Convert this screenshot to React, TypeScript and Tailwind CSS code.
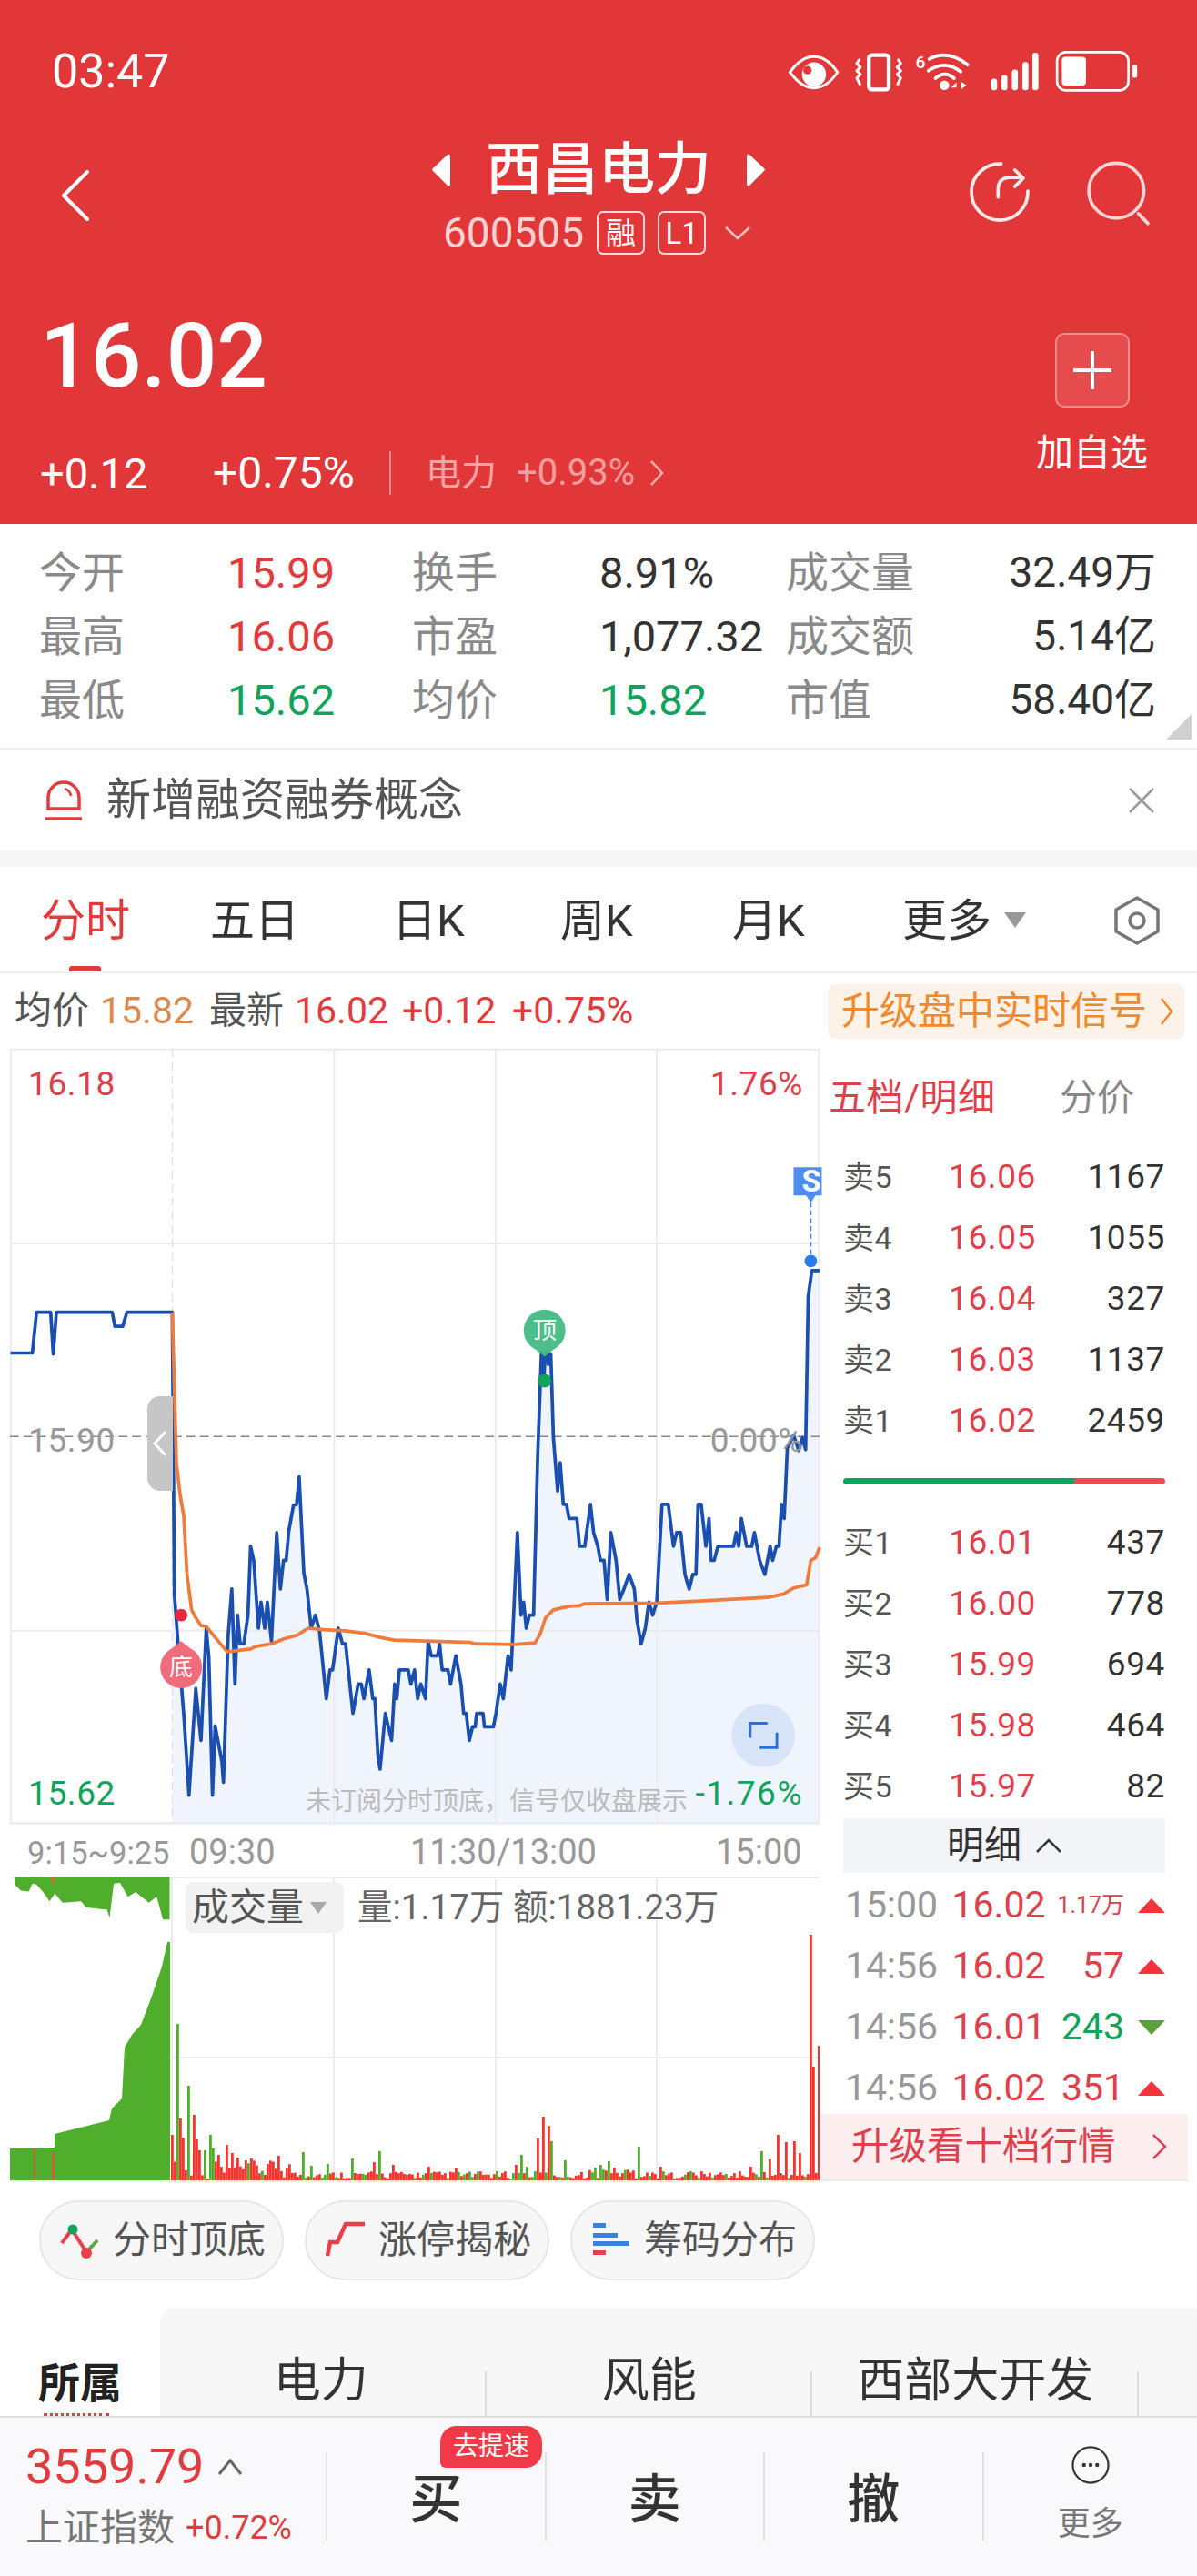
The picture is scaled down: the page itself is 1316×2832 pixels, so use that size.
import React from "react";

const BLUE_LINE =
  "20,588 62,588 70,510 97,510 102,590 108,510 215,510 220,537 235,537 243,510 330,510 334,1050 340,1130 352,1280 362,1435 375,1230 385,1330 395,1115 400,1170 407,1435 412,1302 425,1370 428,1410 437,1130 444,1040 450,1222 455,1090 460,1145 467,1145 475,1090 480,958 486,985 495,1115 500,1065 507,1115 512,1065 520,1140 530,932 537,1040 543,985 548,985 553,930 562,880 568,878 573,825 582,1010 588,1040 596,1115 604,1090 612,1120 625,1250 632,1195 637,1195 648,1115 656,1145 662,1145 676,1278 686,1222 692,1222 697,1250 707,1195 714,1250 718,1250 724,1360 728,1385 738,1278 750,1330 756,1222 760,1250 765,1195 782,1195 787,1222 794,1195 800,1250 806,1222 815,1250 820,1140 826,1168 838,1168 842,1145 847,1195 858,1195 863,1222 873,1168 883,1222 888,1278 893,1278 899,1330 905,1304 910,1304 913,1278 925,1278 928,1304 945,1304 950,1278 958,1222 964,1250 973,1168 979,1195 991,932 998,1090 1003,1065 1008,1115 1014,1090 1022,1090 1030,780 1037,590 1042,640 1047,510 1050,610 1055,590 1060,750 1068,852 1073,798 1079,878 1085,878 1090,905 1105,905 1110,958 1120,958 1131,878 1137,932 1145,958 1150,985 1157,985 1163,1060 1170,932 1180,985 1187,1060 1195,1040 1205,1012 1215,1040 1220,1100 1228,1145 1236,1115 1243,1065 1250,1090 1258,1065 1268,878 1280,878 1290,958 1296,932 1304,932 1312,1012 1320,1040 1327,1012 1333,1012 1337,878 1343,878 1352,958 1358,905 1362,985 1368,985 1375,958 1405,958 1410,932 1415,958 1420,905 1430,958 1440,958 1445,932 1455,985 1465,1012 1475,958 1480,985 1487,958 1492,958 1497,878 1502,905 1508,770 1520,745 1530,775 1537,750 1543,773 1548,480 1555,430 1570,430";
const AVG_LINE =
  "330,510 338,800 345,860 352,900 358,1010 367,1080 375,1095 385,1110 395,1112 410,1130 435,1160 480,1155 490,1150 520,1145 545,1135 570,1128 590,1115 620,1118 660,1120 700,1125 730,1133 755,1138 830,1140 900,1142 910,1145 985,1146 1025,1143 1035,1125 1045,1095 1060,1080 1090,1073 1110,1072 1120,1068 1260,1067 1340,1063 1470,1056 1500,1050 1520,1038 1545,1032 1553,985 1562,980 1570,960";
const FILL_AREA = "330,1490 " + BLUE_LINE.slice(BLUE_LINE.indexOf("330,510")) + " 1570,1490";

const Z = 1.7422;
const preTop = [[28, 68], [28, 95], [40, 115], [55, 118], [62, 92], [70, 95], [85, 125], [95, 150], [105, 125], [120, 155], [155, 150], [165, 170], [205, 178], [210, 205], [218, 92], [230, 90], [245, 135], [260, 120], [285, 155], [300, 135], [305, 165], [312, 210], [325, 210], [325, 68]]
  .map(([x, y]) => `${(x / Z).toFixed(1)},${(2040 + y / 2.99).toFixed(1)}`)
  .join(" ");
const preVol =
  "11,2397 11,2362 60,2361 60,2346 120,2331 123,2318 134,2307 137,2251 145,2237 155,2226 166,2197 178,2162 184,2135 187,2135 187,2397";

// peaks read off the volume chart, the rest is low noise
const peaks: Record<number, [number, string]> = {};
const peakList: [number, number, string][] = [
  [328, 50, "r"], [336, 172, "g"], [345, 68, "r"], [351, 47, "r"], [358, 104, "g"], [367, 72, "r"], [372, 45, "r"], [380, 33, "r"], [390, 33, "g"], [402, 50, "g"], [408, 35, "g"], [418, 28, "r"], [433, 39, "r"], [440, 30, "r"], [452, 25, "r"], [480, 24, "r"], [510, 18, "r"], [532, 27, "r"], [577, 31, "g"], [593, 16, "g"], [625, 18, "g"], [675, 24, "g"], [716, 20, "r"], [723, 32, "g"], [753, 17, "r"], [820, 15, "r"], [872, 13, "r"], [985, 17, "r"], [995, 28, "g"], [1005, 15, "g"], [1028, 46, "r"], [1038, 70, "r"], [1047, 60, "r"], [1052, 43, "g"], [1078, 22, "g"], [1140, 14, "g"], [1150, 17, "g"], [1162, 21, "g"], [1223, 37, "g"], [1265, 15, "r"], [1320, 10, "g"], [1433, 15, "r"], [1455, 32, "g"], [1470, 23, "r"], [1490, 50, "r"], [1505, 42, "r"], [1517, 43, "r"], [1532, 30, "r"], [1548, 270, "r"], [1555, 125, "r"], [1565, 148, "r"],
];
peakList.forEach(([x, h, c]) => {
  peaks[Math.round((x / Z - 188) / 3)] = [h, c];
});
const volBars = Array.from({ length: 238 }, (_, i) => {
  const r = Math.abs(Math.sin(i * 12.9898) * 43758.5453) % 1;
  const q = Math.abs(Math.sin(i * 78.233) * 12543.123) % 1;
  const early = i < 45 ? 16 : i > 150 && i < 175 ? 9 : 4;
  const h = 2 + r * (early + 4);
  const p = peaks[i];
  return {
    x: 188 + i * 3,
    h: p ? p[0] : h,
    fill: (p ? p[1] : q < 0.25 ? "g" : "r") === "g" ? "#4fae2c" : "#f4342f",
  };
});

const sells = [["卖5", "16.06", "1167"], ["卖4", "16.05", "1055"], ["卖3", "16.04", "327"], ["卖2", "16.03", "1137"], ["卖1", "16.02", "2459"]];
const buys = [["买1", "16.01", "437"], ["买2", "16.00", "778"], ["买3", "15.99", "694"], ["买4", "15.98", "464"], ["买5", "15.97", "82"]];

const stats = [
  ["今开", "15.99", "text-[#e23b3d]", "换手", "8.91%", "text-[#333]", "成交量", "32.49万"],
  ["最高", "16.06", "text-[#e23b3d]", "市盈", "1,077.32", "text-[#333]", "成交额", "5.14亿"],
  ["最低", "15.62", "text-[#0ea45c]", "均价", "15.82", "text-[#0ea45c]", "市值", "58.40亿"],
];

const ticks = [
  { t: "15:00", p: "16.02", v: "1.17万", small: true, up: true },
  { t: "14:56", p: "16.02", v: "57", up: true },
  { t: "14:56", p: "16.01", v: "243", up: false },
  { t: "14:56", p: "16.02", v: "351", up: true },
];

function BookRow({ row }: { row: string[] }) {
  return (
    <div className="h-[67px] grid grid-cols-[116px_1fr_auto] items-center text-[37px] tracking-[0.6px]">
      <span className="text-[#555] text-[34px]">{row[0]}</span>
      <span className="text-[#e0404c]">{row[1]}</span>
      <span className="text-[#333]">{row[2]}</span>
    </div>
  );
}

function Pill({ icon, label }: { icon: React.ReactNode; label: string }) {
  return (
    <div className="w-[269px] h-[88px] rounded-full bg-[#f7f7f7] border-2 border-[#e6e6e6] flex items-center pl-[20px] gap-[13px]">
      <span className="w-[46px] h-[46px] shrink-0">{icon}</span>
      <span className="text-[42px] text-[#555] whitespace-nowrap">{label}</span>
    </div>
  );
}

function ChartLabel({ className, children }: { className: string; children: React.ReactNode }) {
  return <span className={`absolute text-[37px] tracking-[0.6px] ${className}`}>{children}</span>;
}

export default function App() {
  return (
    <div className="w-[1316px] h-[2832px] overflow-hidden bg-white leading-none [font-family:Roboto,'Noto_Sans_CJK_SC',sans-serif]">
      {/* Red header */}
      <div className="h-[576px] bg-[#e13739] text-white flex flex-col">
        <div className="h-[156px] flex items-center justify-between pl-[57px] pr-[64px]">
          <span className="text-[52px] pt-[2px]">03:47</span>
          <svg width="387" height="48" viewBox="198 100 1162 145" fill="none" stroke="#fff">
            <path d="M205 177C235 135 260 125 284 125C308 125 335 135 363 177C335 218 308 229 284 229C260 229 235 218 205 177Z" strokeWidth="9" />
            <circle cx="285" cy="184" r="40" fill="#fff" stroke="none" />
            <circle cx="263" cy="170" r="14" fill="#e13739" stroke="none" />
            <rect x="467" y="120" width="66" height="114" rx="10" strokeWidth="13" />
            <path d="M435 136l-8 12 12 12-12 12 12 12-12 12 10 20M565 136l8 12-12 12 12 12-12 12 12 12-10 20" strokeWidth="9" strokeLinecap="round" strokeLinejoin="round" />
            <text x="622" y="162" fill="#fff" stroke="none" fontSize="58" fontWeight="500">6</text>
            <path d="M668 133Q730 100 795 152M665 172Q720 135 772 175M688 197Q720 170 750 197" strokeWidth="11" strokeLinecap="round" />
            <circle cx="718" cy="220" r="16" fill="#fff" stroke="none" />
            <path d="M740 228l18-18v18zM772 208l20 12-20 14z" fill="#fff" stroke="none" />
            {[[873, 198], [907, 186], [942, 168], [977, 143], [1010, 112]].map(([x, y]) => (
              <rect key={x} x={x} y={y} width="20" height={237 - y} rx="9" fill="#fff" stroke="none" />
            ))}
            <rect x="1092" y="110" width="237" height="127" rx="30" strokeWidth="8" />
            <rect x="1108" y="126" width="80" height="95" rx="12" fill="#fff" stroke="none" />
            <rect x="1342" y="153" width="16" height="42" rx="6" fill="#fff" stroke="none" />
          </svg>
        </div>

        <div className="h-[118px] grid grid-cols-[1fr_auto_1fr]">
          <div className="pl-[66px] pt-[30px]">
            <svg width="34" height="58" viewBox="0 0 34 58" fill="none" stroke="#fff" strokeWidth="4" strokeLinecap="round" strokeLinejoin="round">
              <path d="M30 3L4 29l26 26" />
            </svg>
          </div>
          <div className="flex flex-col items-center">
            <div className="h-[62px] flex items-center gap-[38px]">
              <svg width="21" height="36" viewBox="0 0 21 36" fill="#fff"><path d="M20 2v32a2 2 0 0 1-3 1L1 19a2 2 0 0 1 0-3L17 1a2 2 0 0 1 3 1z" /></svg>
              <span className="text-[62px] font-medium whitespace-nowrap">西昌电力</span>
              <svg width="21" height="36" viewBox="0 0 21 36" fill="#fff"><path d="M1 2v32a2 2 0 0 0 3 1L20 19a2 2 0 0 0 0-3L4 1a2 2 0 0 0-3 1z" /></svg>
            </div>
            <div className="mt-[14px] h-[48px] flex items-center text-[#ffd2d2] pr-[3px]">
              <span className="text-[46px]">600505</span>
              <span className="ml-[14px] w-[53px] h-[48px] border-2 border-[#ffd9d9] rounded-[7px] flex items-center justify-center text-[33px] text-white">融</span>
              <span className="ml-[14px] w-[53px] h-[48px] border-2 border-[#ffd9d9] rounded-[7px] flex items-center justify-center text-[33px] text-white">L1</span>
              <svg className="ml-[20px]" width="30" height="16" viewBox="0 0 30 16" fill="none" stroke="#ffc6c6" strokeWidth="2.5"><path d="M2 2l13 12L28 2" /></svg>
            </div>
          </div>
          <div className="flex justify-end items-start pr-[50px] pt-[19px] gap-[58px]">
            <svg width="70" height="72" viewBox="790 475 210 215" fill="none" stroke="#ffeaea" strokeWidth="11" strokeLinecap="round" strokeLinejoin="round">
              <path d="M900 490A93 93 0 1 0 988 580" />
              <path d="M890 600V575Q890 535 930 535H970M945 510L973 537L945 565" />
            </svg>
            <svg width="74" height="74" viewBox="1180 470 220 220" fill="none" stroke="#ffd5d5" strokeWidth="11" strokeLinecap="round">
              <circle cx="1285" cy="573" r="90" />
              <path d="M1357 648L1388 680" />
            </svg>
          </div>
        </div>

        <div className="flex-1 flex justify-between pl-[44px] pr-[54px]">
          <div className="flex flex-col">
            <span className="text-[98px] font-medium mt-[83px] h-[70px] flex items-center">16.02</span>
            <div className="mt-[68px] h-[50px] flex items-center">
              <span className="text-[47px] w-[190px]">+0.12</span>
              <span className="text-[48px] w-[194px]">+0.75%</span>
              <span className="w-[2px] h-[48px] bg-[#ed8a8a]" />
              <span className="ml-[38px] text-[39px] text-[#f7a6a6]">电力</span>
              <span className="ml-[22px] text-[40px] text-[#f59f9f]">+0.93%</span>
              <svg className="ml-[16px]" width="16" height="30" viewBox="0 0 16 30" fill="none" stroke="#f7b3b3" strokeWidth="2.5"><path d="M2 2l12 13L2 28" /></svg>
            </div>
          </div>
          <div className="flex flex-col items-center pt-[92px]">
            <div className="w-[82px] h-[82px] rounded-[10px] bg-[#e64c4e] border-2 border-[#f08c8c] flex items-center justify-center">
              <svg width="44" height="44" viewBox="0 0 44 44" stroke="#fff" strokeWidth="4"><path d="M22 1v42M1 22h42" /></svg>
            </div>
            <span className="mt-[30px] text-[41px] whitespace-nowrap">加自选</span>
          </div>
        </div>
      </div>

      {/* Quote stats */}
      <div className="relative h-[248px] border-b-2 border-[#eee] pt-[18px] pl-[43px] pr-[45px]">
        {stats.map((s) => (
          <div key={s[0]} className="h-[70px] grid grid-cols-[207px_203px_206px_205px_1fr_auto] items-center text-[47px]">
            <span className="text-[47px] text-[#8a8a8a]">{s[0]}</span>
            <span className={s[2]}>{s[1]}</span>
            <span className="text-[47px] text-[#8a8a8a]">{s[3]}</span>
            <span className={`${s[5]} text-[47px]`}>{s[4]}</span>
            <span className="text-[47px] text-[#8a8a8a] whitespace-nowrap">{s[6]}</span>
            <span className="text-[#333] text-[46px]">{s[7]}</span>
          </div>
        ))}
        <svg className="absolute right-[6px] bottom-[9px]" width="28" height="28" viewBox="0 0 28 28" fill="#d0d0d0"><path d="M28 0v28H0z" /></svg>
      </div>

      {/* Notice */}
      <div className="h-[111px] flex items-center pl-[48px] pr-[46px]">
        <svg width="44" height="46" viewBox="0 0 44 46" fill="none" stroke="#e23b3d" strokeWidth="3.5">
          <path d="M5 32V20a17 17 0 0 1 34 0v12zM2 43h40" />
          <path d="M23 10a10 10 0 0 1 7 8" strokeWidth="2.5" />
        </svg>
        <span className="ml-[25px] text-[49px] text-[#555] flex-1">新增融资融券概念</span>
        <svg width="30" height="30" viewBox="0 0 30 30" fill="none" stroke="#999" strokeWidth="2.5"><path d="M2 2l26 26M28 2L2 28" /></svg>
      </div>
      <div className="h-[18px] bg-[#f6f6f6]" />

      {/* Period tabs */}
      <div className="relative h-[117px] border-b-2 border-[#eee] flex items-center text-[49px] text-[#333] pt-[3px]">
        <span className="absolute left-[45px] text-[#e23b3d]">分时</span>
        <span className="absolute left-[231px]">五日</span>
        <span className="absolute left-[431px]">日K</span>
        <span className="absolute left-[616px]">周K</span>
        <span className="absolute left-[805px]">月K</span>
        <span className="absolute left-[992px]">更多</span>
        <svg className="absolute left-[1104px] top-[50px]" width="24" height="17" viewBox="0 0 24 17" fill="#999"><path d="M0 0h24L12 17z" /></svg>
        <svg className="absolute left-[1224px] top-[32px]" width="52" height="54" viewBox="0 0 52 54" fill="none" stroke="#777" strokeWidth="3.5" strokeLinejoin="round">
          <path d="M26 2l23 13v24L26 52 3 39V15z" />
          <circle cx="26" cy="27" r="8" />
        </svg>
        <span className="absolute left-[76px] bottom-0 w-[35px] h-[6px] rounded-t-[3px] bg-[#e23b3d]" />
      </div>

      {/* Price summary */}
      <div className="h-[83px] flex items-center justify-between pl-[16px] pr-[14px] text-[41px]">
        <div className="flex items-center">
          <span className="text-[#555] w-[94px] text-[41px]">均价</span>
          <span className="text-[#d98b4f] w-[120px]">15.82</span>
          <span className="text-[#555] w-[94px] text-[41px]">最新</span>
          <span className="text-[#e23b3d] w-[118px]">16.02</span>
          <span className="text-[#e23b3d] w-[121px]">+0.12</span>
          <span className="text-[#e23b3d]">+0.75%</span>
        </div>
        <div className="w-[392px] h-[60px] rounded-[8px] bg-[#fdf2e8] flex items-center pl-[15px] text-[#f08a2c] text-[42px]">
          升级盘中实时信号
          <svg className="ml-[14px]" width="15" height="32" viewBox="0 0 15 32" fill="none" stroke="#f08a2c" strokeWidth="2.5"><path d="M2 2l11 14L2 30" /></svg>
        </div>
      </div>

      {/* Chart + order book */}
      <div className="h-[1246px] flex">
        <div className="w-[901px] pl-[11px] shrink-0 flex flex-col">
          <div className="relative h-[852px]">
            <svg className="block overflow-visible" width="890" height="852" viewBox="19.16 5.23 1550.56 1484.35" fill="none">
              <polygon points={FILL_AREA} fill="#eff4fd" />
              <g stroke="#ececee" strokeWidth="3.5">
                <path d="M19 6.5H1570M19 378H1570M19 1120H1570M19 1488.5H1570" />
                <path d="M640 5V1490M949 5V1490M1258 5V1490M1568.5 5V1490M20.5 5V1490" />
              </g>
              <path d="M330 5V1490" stroke="#e2e2e2" strokeWidth="2.5" strokeDasharray="16 10" />
              <path d="M19 748H1570" stroke="#888" strokeWidth="2.5" strokeDasharray="17 9" />
              <polyline points={BLUE_LINE} stroke="#1a4fb0" strokeWidth="6.5" strokeLinejoin="round" />
              <polyline points={AVG_LINE} stroke="#ef7b3c" strokeWidth="6.5" strokeLinejoin="round" />
              {/* signal markers */}
              <circle cx="347" cy="1090" r="12" fill="#e8283e" />
              <path d="M347 1140L372 1160H322Z" fill="#ef6c7a" />
              <circle cx="347" cy="1190" r="40" fill="#ef6c7a" />
              <path d="M1043 595L1018 575H1068Z" fill="#3fb783" />
              <circle cx="1043" cy="545" r="40" fill="#4dbd8a" />
              <circle cx="1043" cy="641" r="13" fill="#0ea45c" />
              <path d="M1553 300V400" stroke="#3b82f0" strokeWidth="3" strokeDasharray="9 6" />
              <circle cx="1553" cy="412" r="12" fill="#2a7bf0" />
              <path d="M1520 232H1574V286H1562L1553 300 1544 286H1520Z" fill="#4f8ef0" />
              <circle cx="1462" cy="1320" r="61" fill="#d7e4fa" />
              <path d="M1437 1325V1297H1470M1488 1315V1344H1455" stroke="#2a6fe0" strokeWidth="5" />
            </svg>
            <ChartLabel className="left-[20px] top-[20px] text-[#e0404c]">16.18</ChartLabel>
            <ChartLabel className="right-[18px] top-[20px] text-[#e0404c]">1.76%</ChartLabel>
            <ChartLabel className="left-[20px] top-[412px] text-[#999]">15.90</ChartLabel>
            <ChartLabel className="right-[18px] top-[412px] text-[#999]">0.00%</ChartLabel>
            <ChartLabel className="left-[20px] top-[800px] text-[#0ea45c]">15.62</ChartLabel>
            <ChartLabel className="right-[18px] top-[800px] text-[#0ea45c] tracking-[1.5px]">-1.76%</ChartLabel>
            <span className="absolute left-[325px] top-[814px] text-[28px] text-[#bbb] whitespace-nowrap">未订阅分时顶底，信号仅收盘展示</span>
            <div className="absolute left-[151px] top-[382px] w-[28px] h-[104px] rounded-l-[14px] bg-[#c6c6c6] flex items-center justify-center">
              <svg width="16" height="30" viewBox="0 0 16 30" fill="none" stroke="#fff" strokeWidth="3"><path d="M14 2L2 15l12 13" /></svg>
            </div>
            <span className="absolute left-[165px] top-[667px] w-[46px] text-center text-[26px] text-white">底</span>
            <span className="absolute left-[565px] top-[297px] w-[46px] text-center text-[26px] text-white">顶</span>
            <span className="absolute top-[128px] left-[866px] w-[30px] text-center text-[34px] font-bold text-white">S</span>
          </div>

          <div className="relative h-[58px] text-[38px] text-[#999]">
            <span className="absolute left-[19px] top-[15px] text-[34.5px]">9:15~9:25</span>
            <span className="absolute left-[197px] top-[12px]">09:30</span>
            <span className="absolute left-[440px] top-[12px]">11:30/13:00</span>
            <span className="absolute left-[776px] top-[12px]">15:00</span>
          </div>

          <div className="relative h-[334px]">
            <svg className="block" width="890" height="336" viewBox="11 2063 890 336" fill="none">
              <path d="M11 2064H901M189 2262H901" stroke="#ececee" strokeWidth="2" />
              <path d="M367 2063V2397M545 2063V2397M722 2063V2397M189 2063V2397" stroke="#ececee" strokeWidth="2" />
              <polygon points={preTop} fill="#4fae2c" />
              <rect x="57" y="2063" width="3" height="7" fill="#e2603a" />
              <polygon points={preVol} fill="#4fae2c" />
              <rect x="37" y="2362" width="2" height="35" fill="#d0603a" />
              <rect x="57" y="2366" width="3" height="31" fill="#d0603a" />
              {volBars.map((b) => (
                <rect key={b.x} x={b.x} y={2397 - b.h} width="2.8" height={b.h} fill={b.fill} />
              ))}
              <path d="M11 2398H901" stroke="#ececee" strokeWidth="2" />
            </svg>
            <div className="absolute left-[193px] top-[6px] w-[174px] h-[56px] rounded-[8px] bg-[#f2f2f2] flex items-center pl-[7px] text-[41px] text-[#555]">
              成交量
              <svg className="ml-[7px]" width="18" height="13" viewBox="0 0 18 13" fill="#a8a8a8"><path d="M0 0h18L9 13z" /></svg>
            </div>
            <span className="absolute left-[382px] top-[15px] text-[38.5px] text-[#666] whitespace-nowrap">量:1.17万 额:1881.23万</span>
          </div>
        </div>

        <div className="flex-1 flex flex-col">
          <div className="h-[107px] flex items-center pl-[10px] pt-[2px] text-[41px]">
            <span className="text-[#e0404c] w-[254px] whitespace-nowrap tracking-[0.5px]">五档/明细</span>
            <span className="text-[#888]">分价</span>
          </div>
          <div className="ml-[26px] w-[354px]">
            {sells.map((r) => <BookRow key={r[0]} row={r} />)}
            <div className="h-[67px] flex items-center">
              <div className="h-[7px] w-full rounded-full overflow-hidden flex">
                <div className="w-[254px] bg-[#0ea45c]" />
                <div className="flex-1 bg-[#f3484f]" />
              </div>
            </div>
            {buys.map((r) => <BookRow key={r[0]} row={r} />)}
            <div className="h-[60px] mt-[2px] bg-[#f3f4f8] flex items-center justify-center text-[41px] text-[#333] gap-[16px]">
              明细
              <svg width="28" height="16" viewBox="0 0 28 16" fill="none" stroke="#333" strokeWidth="2.5"><path d="M1 15L14 2l13 13" /></svg>
            </div>
            <div className="h-[265px] pt-[2px]">
              {ticks.map((k, i) => (
                <div key={i} className="h-[67px] flex items-center text-[41px]">
                  <span className="w-[120px] pl-[2px] text-[#999]">{k.t}</span>
                  <span className="w-[102px] text-[#e0404c]">{k.p}</span>
                  <span className={`w-[88px] text-right whitespace-nowrap ${k.small ? "text-[25px] text-[#e0404c]" : k.up ? "text-[#e0404c]" : "text-[#0ea45c]"}`}>{k.v}</span>
                  <svg className="ml-[15px]" width="30" height="16" viewBox="0 0 30 16">
                    {k.up ? <path d="M15 0l15 16H0z" fill="#f4343a" /> : <path d="M0 0h30L15 16z" fill="#5d9f3a" />}
                  </svg>
                </div>
              ))}
            </div>
          </div>
          <div className="ml-[1px] w-[404px] h-[74px] bg-[#fdeeef] border-b-2 border-[#ececee] flex items-center pl-[34px] text-[#e0404c] text-[41.5px]">
            <span className="w-[330px] whitespace-nowrap">升级看十档行情</span>
            <svg width="17" height="30" viewBox="0 0 17 30" fill="none" stroke="#e0404c" strokeWidth="2.5"><path d="M2 2l13 13L2 28" /></svg>
          </div>
        </div>
      </div>

      {/* Feature shortcuts */}
      <div className="h-[138px] flex pl-[43px] gap-[23px] pt-[20px]">
        <Pill
          label="分时顶底"
          icon={
            <svg viewBox="65 2440 46 46" fill="none" strokeWidth="4" width="46" height="46">
              <path d="M68 2466L79 2451L95 2476" stroke="#e8404a" />
              <path d="M95 2476L107 2463" stroke="#5aa845" />
              <circle cx="80" cy="2451" r="5.5" fill="#0ea45c" />
              <circle cx="95" cy="2477" r="6" fill="#e8404a" />
            </svg>
          }
        />
        <Pill
          label="涨停揭秘"
          icon={
            <svg viewBox="358 2442 46 46" fill="none" width="46" height="46" stroke="#e8404a" strokeWidth="4.5">
              <path d="M361 2482L364 2467H372L381 2447H402" />
            </svg>
          }
        />
        <Pill
          label="筹码分布"
          icon={
            <svg viewBox="650 2442 46 46" width="46" height="46">
              <rect x="653" y="2446" width="14" height="5" fill="#3b82e0" />
              <rect x="653" y="2457" width="27" height="5" fill="#3b82e0" />
              <rect x="653" y="2466" width="40" height="5" fill="#3b82e0" />
              <rect x="653" y="2476" width="14" height="5" fill="#e8404a" />
            </svg>
          }
        />
      </div>

      {/* Related sectors */}
      <div className="relative h-[119px] overflow-hidden flex">
        <div className="w-[176px] shrink-0 pl-[42px] pt-[60px] text-[46px] font-bold text-[#222]">所属</div>
        <div className="flex-1 bg-[#f7f7f8] rounded-tl-[16px] flex text-[52px] text-[#333]">
          {["电力", "风能", "西部大开发"].map((s, i) => (
            <div key={s} className="w-[358.5px] pt-[55px] flex justify-center relative">
              <span className={`whitespace-nowrap ${i === 0 ? "mr-[5px]" : ""}`}>{s}</span>
              <span className="absolute right-0 bottom-0 h-[49px] w-[2px] bg-[#ddd]" />
            </div>
          ))}
        </div>
        <span className="absolute left-[48px] bottom-0 w-[72px] border-t-[3px] border-dotted border-[#e23b3d]" />
      </div>

      {/* Bottom bar */}
      <div className="h-[176px] bg-[#f9f9fb] border-t-2 border-[#ddd] flex items-center">
        <div className="w-[358px] h-[115px] mt-[-6px] pl-[28px] flex flex-col justify-between">
          <div className="flex items-center">
            <span className="text-[54px] text-[#e23b3d]">3559.79</span>
            <svg className="ml-[15px]" width="28" height="18" viewBox="0 0 28 18" fill="none" stroke="#666" strokeWidth="3"><path d="M2 17L14 2l12 15" /></svg>
          </div>
          <div className="flex items-center">
            <span className="text-[41px] text-[#777] w-[176px]">上证指数</span>
            <span className="text-[36px] text-[#e23b3d]">+0.72%</span>
          </div>
        </div>
        {["买", "卖", "撤"].map((a) => (
          <div key={a} className="relative w-[240.5px] h-[97px] mt-[-1px] pt-[6px] border-l-2 border-[#e0e0e0] flex items-center justify-center text-[58px] text-[#333] font-medium">
            {a}
            {a === "买" && (
              <span className="absolute left-[124px] top-[-29px] w-[112px] h-[46px] rounded-[18px] rounded-bl-[6px] bg-[#f03a47] text-white text-[28px] font-normal flex items-center justify-center">去提速</span>
            )}
          </div>
        ))}
        <div className="flex-1 h-[97px] mt-[-1px] border-l-2 border-[#e0e0e0] flex flex-col items-center relative">
          <svg className="mt-[-7px]" width="58" height="58" viewBox="0 0 58 58" fill="none" stroke="#333" strokeWidth="3">
            <circle cx="29" cy="29" r="27" />
            <circle cx="19" cy="29" r="1.5" fill="#333" />
            <circle cx="29" cy="29" r="1.5" fill="#333" />
            <circle cx="39" cy="29" r="1.5" fill="#333" />
          </svg>
          <span className="mt-[26px] text-[36px] text-[#777]">更多</span>
        </div>
      </div>
    </div>
  );
}
